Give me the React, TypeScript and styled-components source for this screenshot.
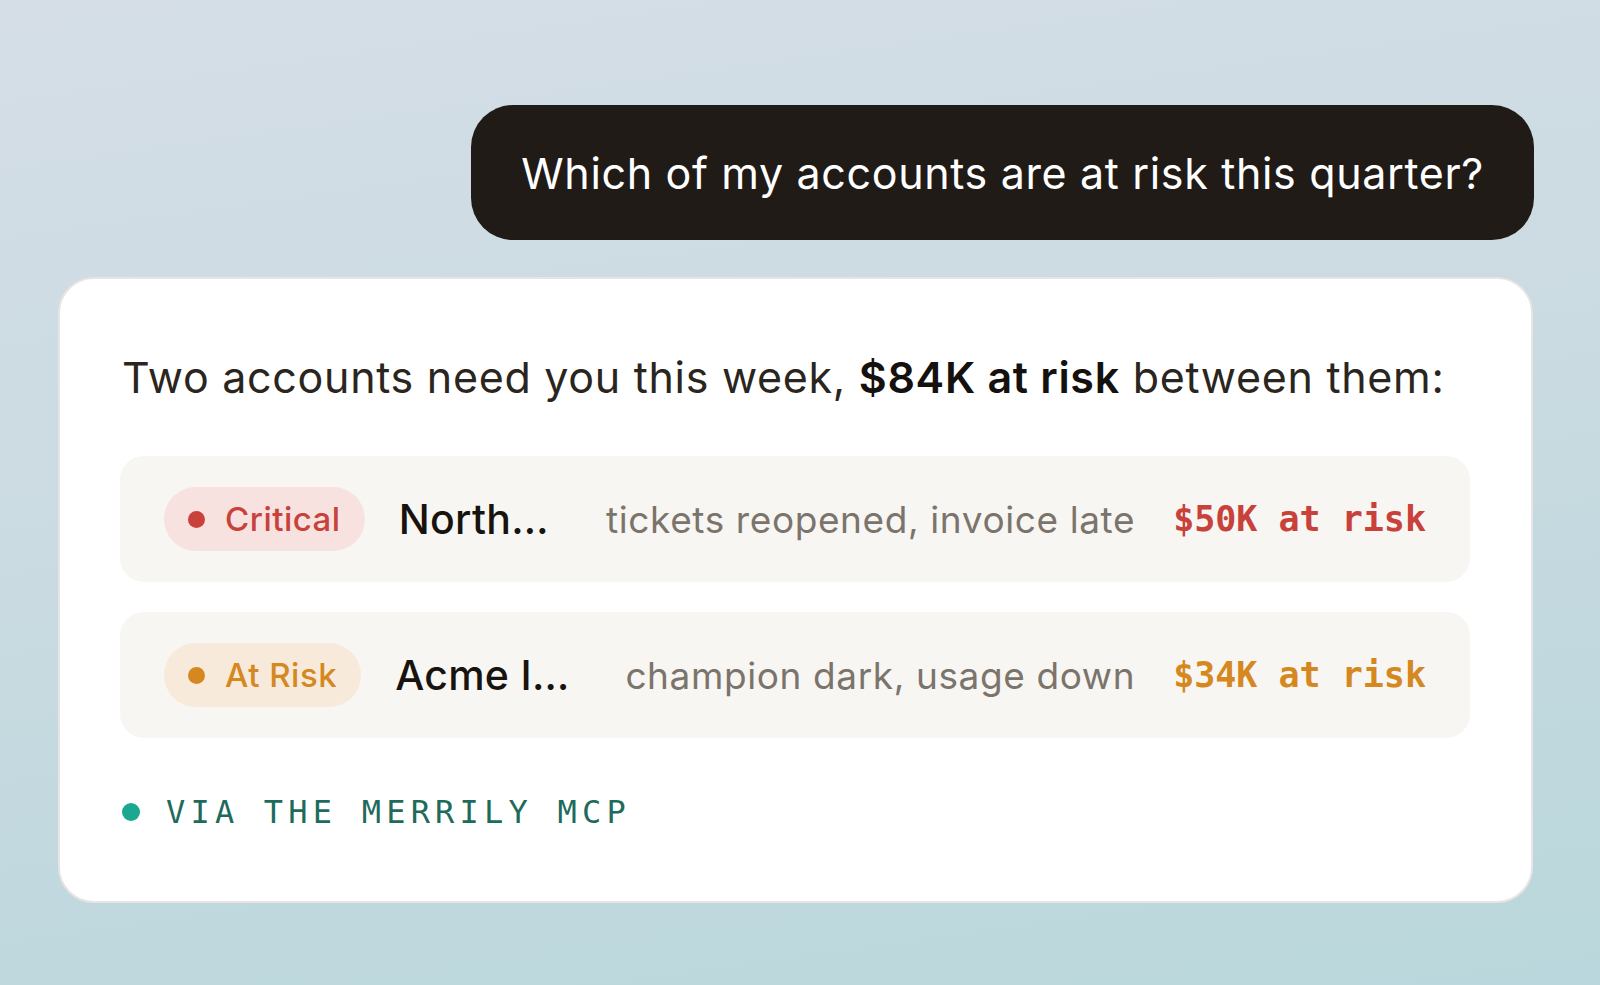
import React from 'react';
import styled, { createGlobalStyle } from 'styled-components';

const GlobalStyle = createGlobalStyle`
  html, body {
    margin: 0;
    padding: 0;
  }
  body {
    font-family: Inter, "Noto Sans", sans-serif;
    -webkit-font-smoothing: antialiased;
  }
  * {
    box-sizing: border-box;
  }
`;

const Page = styled.div`
  width: 1600px;
  height: 985px;
  overflow: hidden;
  display: flex;
  flex-direction: column;
  align-items: stretch;
  gap: 37px;
  padding: 105px 67px 0 58px;
  background: linear-gradient(172deg, #d5dee6 0%, #cadbe1 45%, #b9d7dc 100%);
`;

const Bubble = styled.div`
  align-self: flex-end;
  margin-right: -1px;
  height: 135px;
  display: flex;
  align-items: center;
  padding: 0 50px;
  background: #201b17;
  border-radius: 42px;
  color: #ffffff;
  font-size: 43px;
  font-weight: 400;
  letter-spacing: 0.65px;
`;

const Card = styled.div`
  background: #ffffff;
  border: 2px solid #e7e4e3;
  border-radius: 36px;
  padding: 73px 61px 0 60px;
  height: 626px;
  display: flex;
  flex-direction: column;
`;

const Lead = styled.p`
  margin: 0 0 54px 0;
  padding-left: 2px;
  font-size: 43px;
  line-height: 50px;
  letter-spacing: 0.7px;
  color: #2b2520;
  font-weight: 400;

  strong {
    color: #15110e;
    font-weight: 600;
  }
`;

const List = styled.div`
  display: flex;
  flex-direction: column;
  gap: 30px;
`;

type Level = 'critical' | 'risk';

const tone = {
  critical: { fg: '#c8413a', bg: '#f7e2df' },
  risk: { fg: '#d4881f', bg: '#f8eadb' },
};

const Row = styled.div`
  height: 126px;
  border-radius: 24px;
  background: #f8f6f2;
  display: flex;
  align-items: center;
  gap: 34px;
  padding: 0 44px 0 44px;
`;

const Pill = styled.span<{ $level: Level }>`
  flex: none;
  height: 64px;
  border-radius: 32px;
  padding: 0 24px;
  display: flex;
  align-items: center;
  gap: 20px;
  background: ${p => tone[p.$level].bg};
  color: ${p => tone[p.$level].fg};
  font-size: 33px;
  letter-spacing: 0.5px;
  font-weight: 500;
`;

const Dot = styled.span<{ $color: string; $size?: number }>`
  flex: none;
  width: ${p => p.$size ?? 17}px;
  height: ${p => p.$size ?? 17}px;
  border-radius: 50%;
  background: ${p => p.$color};
`;

const Name = styled.span`
  flex: 1 1 auto;
  min-width: 0;
  white-space: nowrap;
  overflow: hidden;
  text-overflow: ellipsis;
  font-size: 41px;
  letter-spacing: 0.3px;
  font-weight: 500;
  color: #17130f;
`;

const Reason = styled.span`
  flex: none;
  margin-right: 4px;
  white-space: nowrap;
  font-size: 37px;
  letter-spacing: 0.6px;
  color: #7b746c;
`;

const Amount = styled.span<{ $level: Level }>`
  flex: none;
  white-space: nowrap;
  font-family: "DejaVu Sans Mono", "Liberation Mono", monospace;
  font-weight: 700;
  font-size: 35px;
  color: ${p => tone[p.$level].fg};
`;

const Source = styled.div`
  margin-top: 55px;
  padding-left: 2px;
  display: flex;
  align-items: center;
  gap: 26px;
  font-family: "DejaVu Sans Mono", "Liberation Mono", monospace;
  font-size: 32px;
  line-height: 38px;
  letter-spacing: 5.2px;
  color: #1f6b5b;
`;

const accounts: { level: Level; label: string; name: string; reason: string; amount: string }[] = [
  {
    level: 'critical',
    label: 'Critical',
    name: 'Northwind Logistics',
    reason: 'tickets reopened, invoice late',
    amount: '$50K at risk',
  },
  {
    level: 'risk',
    label: 'At Risk',
    name: 'Acme Industries',
    reason: 'champion dark, usage down',
    amount: '$34K at risk',
  },
];

const App: React.FC = () => {
  return (
    <>
      <GlobalStyle />
      <Page>
        <Bubble>Which of my accounts are at risk this quarter?</Bubble>
        <Card>
          <Lead>
            Two accounts need you this week, <strong>$84K at risk</strong> between them:
          </Lead>
          <List>
            {accounts.map(a => (
              <Row key={a.name}>
                <Pill $level={a.level}>
                  <Dot $color={tone[a.level].fg} />
                  {a.label}
                </Pill>
                <Name>{a.name}</Name>
                <Reason>{a.reason}</Reason>
                <Amount $level={a.level}>{a.amount}</Amount>
              </Row>
            ))}
          </List>
          <Source>
            <Dot $color="#1aa990" $size={18} />
            VIA THE MERRILY MCP
          </Source>
        </Card>
      </Page>
    </>
  );
};

export default App;
